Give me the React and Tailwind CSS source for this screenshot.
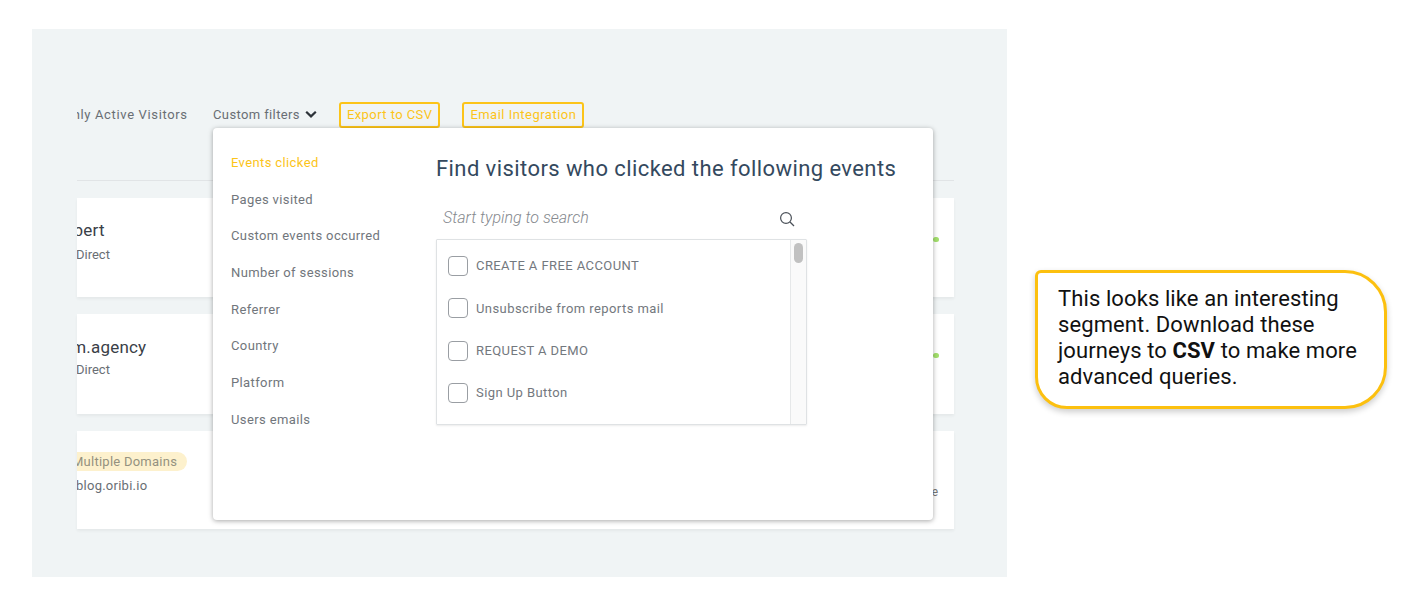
import React from 'react';

const menuItems = [
  'Events clicked',
  'Pages visited',
  'Custom events occurred',
  'Number of sessions',
  'Referrer',
  'Country',
  'Platform',
  'Users emails',
];

const events = ['CREATE A FREE ACCOUNT', 'Unsubscribe from reports mail', 'REQUEST A DEMO', 'Sign Up Button'];

const Card = ({ children, className = '', dot = false, tail = false }) => (
  <div className={`relative bg-white shadow-[0_2px_3px_rgba(0,0,0,0.05)] overflow-hidden ${className}`}>
    {children}
    {dot && <div className="absolute right-[15px] top-[39px] w-[6px] h-[5px] rounded-full bg-[#a3e06c]" />}
    {tail && <div className="absolute right-[16px] top-[54px] text-[12px] leading-[14px] text-[#777]">e</div>}
  </div>
);

// Event picker list
const EventList = () => (
  <div className="flex w-[371px] h-[186px] border border-[#dfe2e4] shadow-[0_1px_2px_rgba(0,0,0,0.08)] rounded-[1px]">
    <div className="flex-1 flex flex-col gap-[22.3px] pl-[11px] pt-[16px]">
      {events.map((name) => (
        <label key={name} className="flex items-center gap-[8px] h-[20px]">
          <span className="w-[20px] h-[20px] rounded-[4px] border border-[#9a9ea3] bg-white" />
          <span className="text-[13px] tracking-[0.42px] text-[#73787e]">{name}</span>
        </label>
      ))}
    </div>
    <div className="w-[16px] border-l border-[#e6e8e9] bg-[#fafafa] pt-[3px] flex justify-center">
      <div className="w-[9px] h-[20px] rounded-full bg-[#c1c1c1]" />
    </div>
  </div>
);

const Dropdown = () => (
  <div className="absolute left-[181px] top-[99px] w-[720px] h-[392px] bg-white rounded-[4px] shadow-[0_1px_5px_rgba(0,0,0,0.35)] flex">
    <div className="w-[223px] pl-[18px] pt-[26px] flex flex-col gap-[18.7px]">
      {menuItems.map((item, i) => (
        <div
          key={item}
          className={`text-[13px] leading-[18px] tracking-[0.38px] ${i === 0 ? 'text-[#fcc419]' : 'text-[#71767c]'}`}
        >
          {item}
        </div>
      ))}
    </div>
    <div className="flex-1 pt-[26px]">
      <h2 className="text-[22px] leading-[30px] font-normal tracking-[0.42px] text-[#34495e]">
        Find visitors who clicked the following events
      </h2>
      <div className="flex items-center justify-between w-[359px] h-[28px] mt-[20px] mb-[7px] pl-[7px]">
        <span className="text-[16px] italic font-light text-[#85898e]">Start typing to search</span>
        <svg width="16" height="16" viewBox="0 0 16 16" fill="none" stroke="#4a5058" strokeWidth="1.2" className="mt-[2px]">
          <circle cx="7" cy="7" r="5.4" />
          <path d="M11 11l4 4" />
        </svg>
      </div>
      <EventList />
    </div>
  </div>
);

export default function App() {
  return (
    <div className="flex items-start w-[1425px] h-[611px] bg-white font-['Roboto',sans-serif] overflow-hidden">
      {/* Product screenshot */}
      <div className="relative ml-[32px] mt-[29px] w-[975px] h-[548px] bg-[#f0f4f5] px-[45px] shrink-0">
        <div className="w-[877px] overflow-hidden">
          <div className="h-[152px] border-b border-[#e1e4e6] pt-[73px]">
            <div className="flex items-center h-[26px] text-[13px] tracking-[0.38px] text-[#696e74] whitespace-nowrap">
              <span className="ml-[-26px] w-[162px] shrink-0 pb-[1px] tracking-[0.65px]">Highly Active Visitors</span>
              <span className="pb-[1px]">Custom filters</span>
              <svg width="12" height="9" viewBox="0 0 12 9" fill="none" stroke="#2d3339" strokeWidth="2.2" className="ml-[5px] mb-[1px]">
                <path d="M1.2 1.8L6 6.4l4.8-4.6" />
              </svg>
              <button className="ml-[22px] h-[26px] px-[6px] border-2 border-[#fcc419] rounded-[3px] text-[#fcc419] tracking-[0.42px] leading-[20px]">
                Export to CSV
              </button>
              <button className="ml-[22px] h-[26px] px-[6px] border-2 border-[#fcc419] rounded-[3px] text-[#fcc419] tracking-[0.48px] leading-[20px]">
                Email Integration
              </button>
            </div>
          </div>
        </div>

        <div className="w-[877px] flex flex-col gap-[17px] pt-[17px]">
          <Card className="h-[99px] pt-[22px]" dot>
            <div className="ml-[-24px] text-[17px] leading-[20px] tracking-[0.2px] text-[#3a4047] whitespace-nowrap">Robert</div>
            <div className="mt-[6px] ml-[-1px] text-[13px] leading-[18px] text-[#696e74]">Direct</div>
          </Card>
          <Card className="h-[100px] pt-[23px]" dot>
            <div className="ml-[-45px] text-[17px] leading-[20px] tracking-[0.2px] text-[#3a4047] whitespace-nowrap">stream.agency</div>
            <div className="mt-[4px] ml-[-1px] text-[13px] leading-[18px] text-[#696e74]">Direct</div>
          </Card>
          <Card className="h-[98px] pt-[21px]" tail>
            <div className="ml-[-13px] w-fit rounded-full bg-[#fdf1cd] pl-[8px] pr-[10px] text-[13px] leading-[19px] tracking-[0.25px] text-[#949180] whitespace-nowrap">
              Multiple Domains
            </div>
            <div className="mt-[6px] ml-[-1px] text-[13px] leading-[18px] tracking-[0.25px] text-[#696e74]">blog.oribi.io</div>
          </Card>
        </div>

        <Dropdown />
      </div>

      {/* Callout */}
      <div className="ml-[28px] mt-[270px] w-[352px] h-[139px] shrink-0 border-[3px] border-[#fcc00f] rounded-[6px_42px_42px_32px] bg-white shadow-[0_3px_6px_rgba(0,0,0,0.2)] pl-[20px] pt-[13px] text-[22px] leading-[26px] tracking-[0.1px] text-[#111]">
        This looks like an interesting
        <br />
        segment. Download these
        <br />
        journeys to <b className="font-bold">CSV</b> to make more
        <br />
        advanced queries.
      </div>
    </div>
  );
}
